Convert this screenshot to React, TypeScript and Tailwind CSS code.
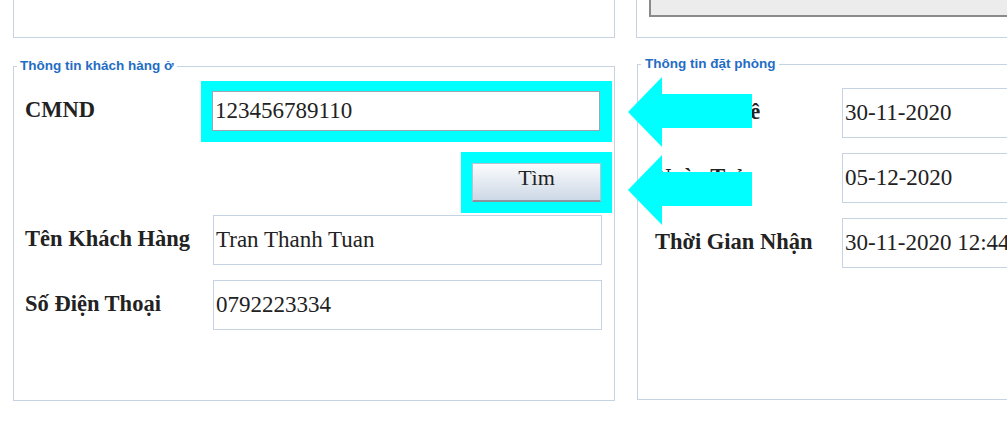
import React from "react";

const serif = "font-['Liberation_Serif','Times_New_Roman',serif]";
const sans = "font-['Liberation_Sans',Arial,sans-serif]";

function Arrow({ className }: { className: string }) {
  return (
    <svg
      className={`pointer-events-none absolute ${className}`}
      width="126"
      height="70"
      viewBox="0 0 126 70"
    >
      <polygon
        points="0,35 34,0 34,17 124,17 124,51 34,51 34,70"
        fill="#00ffff"
      />
    </svg>
  );
}

function Field({
  label,
  value,
  labelWidth,
}: {
  label: string;
  value: string;
  labelWidth: string;
}) {
  return (
    <div className="flex items-center">
      <div
        className={`${labelWidth} shrink-0 pb-[2px] text-[22.5px] font-bold text-[#222] ${serif}`}
      >
        {label}
      </div>
      <div
        className={`flex h-[50px] flex-1 items-center overflow-hidden border border-[#c6d3e3] bg-white pl-[2px] text-[23px] whitespace-nowrap text-[#222] ${serif}`}
      >
        {value}
      </div>
    </div>
  );
}

export default function App() {
  return (
    <div className="relative h-[446px] w-[1007px] overflow-hidden bg-white">
      {/* Panels cut off at the top */}
      <div className="flex h-[38px]">
        <div className="ml-[13px] w-[602px] border-x border-b border-[#c6d3e3]" />
        <div className="ml-[21px] flex-1 border-b border-l border-[#c6d3e3] pl-[12px]">
          <div className="h-[17px] border-b-2 border-l-2 border-[#8a8a8a] bg-[#ececec]" />
        </div>
      </div>

      <div className="mt-[26px] flex items-start">
        {/* Thông tin khách hàng ở */}
        <div className="relative mt-[2px] ml-[13px] h-[335px] w-[602px] border border-[#c6d3e3] pt-[14px] pr-[2px] pl-[11px]">
          <span
            className={`absolute top-[-9px] left-[3px] bg-white px-[3px] text-[13.5px] leading-[16px] font-bold text-[#1f6dc4] ${sans}`}
          >
            Thông tin khách hàng ở
          </span>

          <div className="flex items-center">
            <div className={`w-[176px] pb-[3px] text-[22.5px] font-bold text-[#222] ${serif}`}>
              CMND
            </div>
            <div className="w-[411px] border-t-[10px] border-r-[12px] border-b-[11px] border-l-[11px] border-[#00ffff]">
              <div
                className={`flex h-[40px] items-center border border-[#9ba6b3] bg-white pl-[2px] text-[23px] text-[#222] ${serif}`}
              >
                123456789110
              </div>
            </div>
          </div>

          <div className="mt-[10px] flex justify-end">
            <div className="border-[11px] border-[#00ffff]">
              <button
                className={`block h-[39px] w-[129px] border border-b-2 border-[#b7c2d0] border-b-[#8c939c] bg-gradient-to-b from-[#fbfcfd] to-[#cdd8e6] pb-[8px] text-[22px] leading-[26px] text-[#222] ${serif}`}
              >
                Tìm
              </button>
            </div>
          </div>

          <div className="mt-[2px] flex flex-col gap-[15px] pr-[10px]">
            <Field label="Tên Khách Hàng" value="Tran Thanh Tuan" labelWidth="w-[188px]" />
            <Field label="Số Điện Thoại" value="0792223334" labelWidth="w-[188px]" />
          </div>
        </div>

        {/* Thông tin đặt phòng */}
        <div className="relative ml-[22px] h-[336px] flex-1 border-y border-l border-[#c6d3e3] pt-[23px] pl-[17px]">
          <span
            className={`absolute top-[-9px] left-[3px] bg-white px-[4px] text-[13.5px] leading-[16px] font-bold text-[#1f6dc4] ${sans}`}
          >
            Thông tin đặt phòng
          </span>
          <div className="flex flex-col gap-[15px]">
            <Field label="Ngày Thuê" value="30-11-2020" labelWidth="w-[187px]" />
            <Field label="Ngày Trả" value="05-12-2020" labelWidth="w-[187px]" />
            <Field label="Thời Gian Nhận" value="30-11-2020 12:44" labelWidth="w-[187px]" />
          </div>
        </div>
      </div>

      {/* Annotation arrows */}
      <Arrow className="top-[77px] left-[628px]" />
      <Arrow className="top-[155px] left-[628px]" />
    </div>
  );
}
